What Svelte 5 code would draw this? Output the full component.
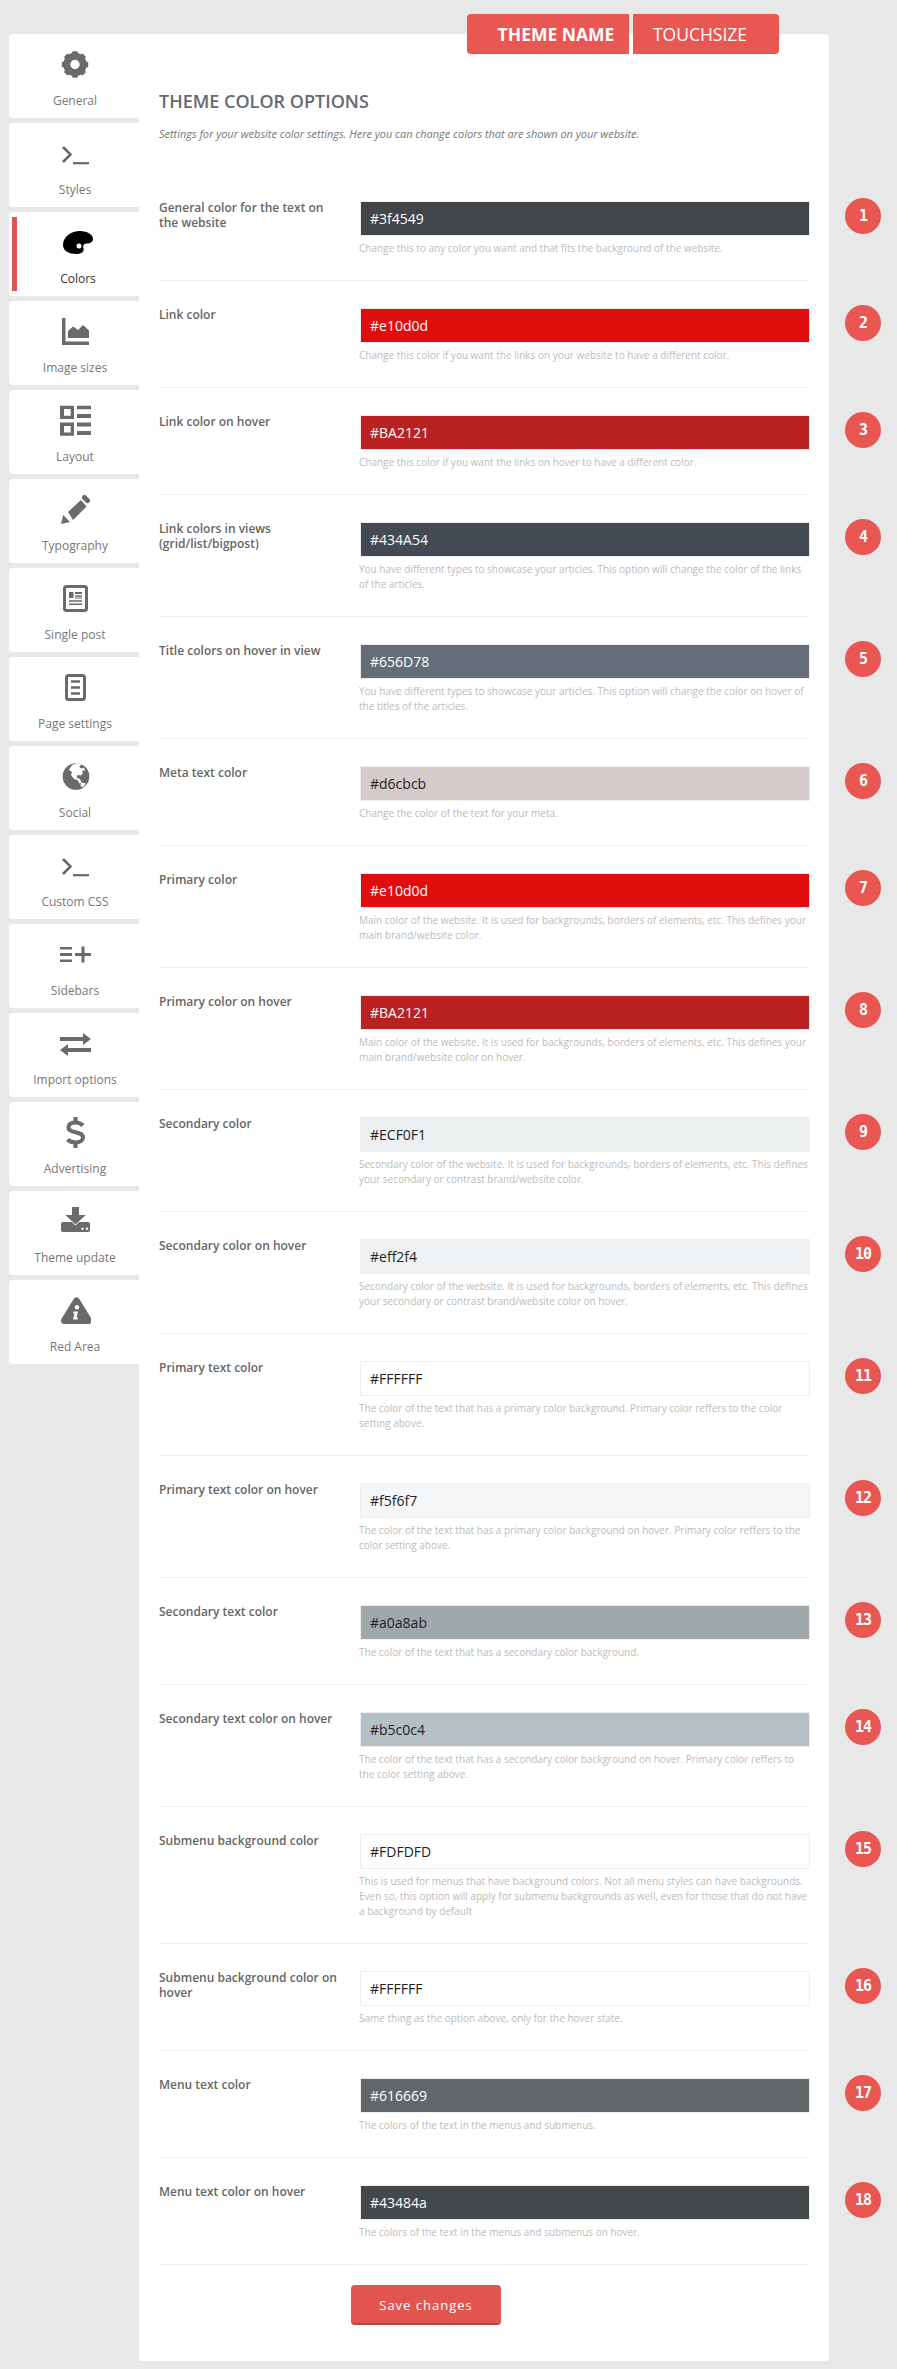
<script>
  const tabs = [
    ['general', 'General'], ['terminal', 'Styles'], ['palette', 'Colors'], ['chart', 'Image sizes'],
    ['layout', 'Layout'], ['pencil', 'Typography'], ['post', 'Single post'], ['page', 'Page settings'],
    ['globe', 'Social'], ['terminal', 'Custom CSS'], ['sidebars', 'Sidebars'], ['swap', 'Import options'],
    ['dollar', 'Advertising'], ['update', 'Theme update'], ['warn', 'Red Area']
  ];
  const mainDesc = 'Main color of the website. It is used for backgrounds, borders of elements, etc. This defines your main brand/website color';
  const secDesc = 'Secondary color of the website. It is used for backgrounds, borders of elements, etc. This defines your secondary or contrast brand/website color';
  const rows = [
    ['General color for the text on the website', '#3f4549', 'Change this to any color you want and that fits the background of the website.', true],
    ['Link color', '#e10d0d', 'Change this color if you want the links on your website to have a different color.', true],
    ['Link color on hover', '#BA2121', 'Change this color if you want the links on hover to have a different color.', true],
    ['Link colors in views (grid/list/bigpost)', '#434A54', 'You have different types to showcase your articles. This option will change the color of the links of the articles.', true],
    ['Title colors on hover in view', '#656D78', 'You have different types to showcase your articles. This option will change the color on hover of the titles of the articles.', true],
    ['Meta text color', '#d6cbcb', 'Change the color of the text for your meta.', false],
    ['Primary color', '#e10d0d', mainDesc + '.', true],
    ['Primary color on hover', '#BA2121', mainDesc + ' on hover.', true],
    ['Secondary color', '#ECF0F1', secDesc + '.', false],
    ['Secondary color on hover', '#eff2f4', secDesc + ' on hover.', false],
    ['Primary text color', '#FFFFFF', 'The color of the text that has a primary color background. Primary color reffers to the color setting above.', false],
    ['Primary text color on hover', '#f5f6f7', 'The color of the text that has a primary color background on hover. Primary color reffers to the color setting above.', false],
    ['Secondary text color', '#a0a8ab', 'The color of the text that has a secondary color background.', false],
    ['Secondary text color on hover', '#b5c0c4', 'The color of the text that has a secondary color background on hover. Primary color reffers to the color setting above.', false],
    ['Submenu background color', '#FDFDFD', 'This is used for menus that have background colors. Not all menu styles can have backgrounds. Even so, this option will apply for submenu backgrounds as well, even for those that do not have a background by default', false],
    ['Submenu background color on hover', '#FFFFFF', 'Same thing as the option above, only for the hover state.', false],
    ['Menu text color', '#616669', 'The colors of the text in the menus and submenus.', true],
    ['Menu text color on hover', '#43484a', 'The colors of the text in the menus and submenus on hover.', true]
  ];
  const teeth = [0, 45, 90, 135, 180, 225, 270, 315];
</script>

<div class="page">
  <header class="brand">
    <div class="brand-name">THEME NAME</div>
    <div class="brand-by">TOUCHSIZE</div>
  </header>
  <div class="shell">
    <nav class="tabs">
      {#each tabs as [icon, label]}
        <div class="tab" class:active={label === 'Colors'}>
          <svg class="ico" viewBox="0 0 32 32" width="32" height="32" aria-hidden="true">
            {#if icon === 'general'}
              <g transform="translate(16 16.5)">
                <circle r="8.2" fill="none" stroke="currentColor" stroke-width="7" />
                {#each teeth as t}
                  <rect x="-2.8" y="-13.2" width="5.6" height="5" rx="1" fill="currentColor" transform="rotate({t})" />
                {/each}
              </g>
            {:else if icon === 'terminal'}
              <path d="M4 10l7.5 7.5L4 25" fill="none" stroke="currentColor" stroke-width="2.6" />
              <path d="M14 26.2h16" fill="none" stroke="currentColor" stroke-width="2.2" />
            {:else if icon === 'palette'}
              <path d="M1 19C1 11 9 5 18 5c8 0 13 4 13 8 0 3-3 4.500-6 4.500-3 0-4.500 2-3.500 5 1 3-2 5.500-7 5.500C7 28 1 25 1 19Z" fill="currentColor" />
              <circle cx="17" cy="20" r="2.500" fill="#fff" />
            {:else if icon === 'chart'}
              <path d="M3 3h3.500v23.500H30V30H3ZM9 23v-7l5-4.500 5 3.500 5-5 6 5.500V23Z" fill="currentColor" />
            {:else if icon === 'layout'}
              <path fill-rule="evenodd" d="M1 1.700h14V15H1ZM5 5v6.700h6.700V5ZM1 18.500h14v13.200H1ZM5 22v6.500h6.700V22Z" fill="currentColor" />
              <path d="M18 1.700h14v3.600H18ZM18 10h14v4H18ZM18 18.500h14v4H18ZM18 27h14v4H18Z" fill="currentColor" />
            {:else if icon === 'pencil'}
              <path d="M2 31l2.200-9 6.800 7ZM9 19L22 7l5.500 6.500L14 27Z" fill="currentColor" />
              <path d="M25.500 4.500l3 3" stroke="currentColor" stroke-width="5" stroke-linecap="round" />
            {:else if icon === 'post'}
              <rect x="5.500" y="4.500" width="22" height="24" rx="2" fill="none" stroke="currentColor" stroke-width="3" />
              <path d="M10 10h4.500v6H10ZM16 10h7v2h-7ZM16 13.200h7v1.500h-7ZM16 15.500h7v1h-7ZM10 18.300h13v1.500H10ZM10 21.500h13v1.500H10Z" fill="currentColor" />
            {:else if icon === 'page'}
              <rect x="7.500" y="4.500" width="18" height="24" rx="2" fill="none" stroke="currentColor" stroke-width="3" />
              <path d="M12 10.500h9M12 16.500h9M12 22.500h9" stroke="currentColor" stroke-width="2.500" />
            {:else if icon === 'globe'}
              <circle cx="17" cy="16.500" r="13.300" fill="currentColor" />
              <path d="M13 5l5-2 4.500 1.500L20 7l3 1.500 2-1 1 3-3 .5 1 2.500-2.500 2-3-.5-1 2.500 3.500 1.500 1.500 3.500-2 1-2-3.500-3.500-1L12 15l1-3-3-2Z" fill="#fff" />
              <path d="M22 22.500l5 1-3 4-2.500-1.500Z" fill="#fff" />
            {:else if icon === 'sidebars'}
              <path d="M1 9h12v2.500H1ZM1 15h12v3H1ZM1 21.500h12V24H1ZM16 15h16v3H16ZM22.500 8.500h3v16h-3Z" fill="currentColor" />
            {:else if icon === 'swap'}
              <path d="M1 10h23V6l8 6-8 6v-4H1ZM32 21H9v-4l-8 6 8 6v-4h23Z" fill="currentColor" />
            {:else if icon === 'dollar'}
              <path d="M24 9.500C22 7.500 19 6.500 16.500 6.500c-4.500 0-7 2-7 5 0 6.500 14.500 3 14.500 10 0 3-3 5-7.500 5-3 0-6-1-8-3" fill="none" stroke="currentColor" stroke-width="4" />
              <path d="M16.500 1v5M16.500 27v5" stroke="currentColor" stroke-width="4" />
            {:else if icon === 'update'}
              <rect x="2" y="17" width="29" height="10" rx="2" fill="currentColor" />
              <path d="M13 2h7v8h6.700l-10.200 9.500L6.300 10H13Z" fill="currentColor" stroke="#fff" stroke-width="1.500" paint-order="stroke" />
              <circle cx="23.500" cy="23.800" r="1.200" fill="#fff" />
              <circle cx="28" cy="23.800" r="1.200" fill="#fff" />
            {:else if icon === 'warn'}
              <path d="M17.500 7L29.500 26.500H5.500Z" fill="currentColor" stroke="currentColor" stroke-width="7" stroke-linejoin="round" />
              <circle cx="18" cy="13.300" r="2.200" fill="#fff" />
              <path d="M14.500 17.500h4.500l-1.500 6h1.500l-.5 2h-4.500l1.500-6h-1.500Z" fill="#fff" />
            {/if}
          </svg>
          <span class="tab-label">{label}</span>
        </div>
      {/each}
    </nav>

    <main class="panel">
      <div class="head">
        <h1>THEME COLOR OPTIONS</h1>
        <p>Settings for your website color settings. Here you can change colors that are shown on your website.</p>
      </div>

      {#each rows as [label, value, desc, dark], i}
        <div class="row">
          <label class="row-label" for="c{i}">{label}</label>
          <div class="row-field">
            <input id="c{i}" class="swatch" class:dark type="text" {value} style="background-color: {value}" readonly />
            <p class="desc">{desc}</p>
          </div>
          <span class="badge">{i + 1}</span>
        </div>
      {/each}

      <div class="actions">
        <button type="button" class="save">Save changes</button>
      </div>
    </main>
  </div>
</div>

<style>
  :global(body) {
    margin: 0;
    background: #e8e8e8;
  }
  .page {
    font-family: "Open Sans", "Liberation Sans", sans-serif;
    padding-top: 14px;
    padding-bottom: 8px;
    width: 897px;
    box-sizing: border-box;
  }
  .brand {
    display: flex;
    gap: 4px;
    margin-left: 467px;
    height: 40px;
    margin-bottom: -20px;
    position: relative;
    z-index: 1;
  }
  .brand-name,
  .brand-by {
    background: #e85751;
    color: #fff;
    display: flex;
    align-items: center;
    justify-content: center;
    box-sizing: border-box;
  }
  .brand-name {
    width: 162px;
    font-weight: 700;
    font-size: 17.5px;
    border-radius: 4px 0 0 4px;
    padding-left: 16px;
  }
  .brand-by {
    width: 146px;
    font-weight: 400;
    font-size: 17.5px;
    border-radius: 0 4px 4px 0;
    padding-right: 12px;
  }
  .shell {
    display: flex;
    align-items: flex-start;
    padding-left: 9px;
  }
  .tabs {
    width: 130px;
    display: flex;
    flex-direction: column;
    gap: 5px;
    flex: none;
  }
  .tab {
    position: relative;
    height: 84px;
    background: #fff;
    border-radius: 4px 0 0 4px;
    display: flex;
    flex-direction: column;
    align-items: center;
    padding: 14px 0 0 2px;
    box-sizing: border-box;
    color: #6a6a6a;
  }
  .ico {
    display: block;
  }
  .tab-label {
    display: block;
    margin-top: 13px;
    font-size: 12px;
    line-height: 16px;
    color: #777;
  }
  .tab.active {
    color: #000;
    padding-left: 8px;
  }
  .tab.active::before {
    content: "";
    position: absolute;
    left: 3px;
    top: 5px;
    bottom: 5px;
    width: 5px;
    background: #de5450;
  }
  .tab.active .tab-label {
    color: #333;
  }
  .panel {
    width: 690px;
    flex: none;
    height: 2327px;
    box-sizing: border-box;
    padding: 0 20px;
    background: #fff;
    border-radius: 0 4px 4px 0;
  }
  .head {
    height: 140px;
    padding-top: 56px;
    box-sizing: border-box;
  }
  h1 {
    margin: 0;
    font-size: 18px;
    line-height: 22px;
    font-weight: 600;
    color: #656a72;
  }
  .head p {
    margin: 14px 0 0;
    font-size: 11px;
    line-height: 16px;
    font-style: italic;
    color: #777;
    letter-spacing: -0.03px;
  }
  .row {
    position: relative;
    display: flex;
    border-bottom: 1px solid #eee;
    padding: 26px 0 24px;
  }
  .row-label {
    width: 178px;
    margin-right: 23px;
    flex: none;
    font-size: 12px;
    line-height: 15px;
    font-weight: 600;
    color: #666;
  }
  .row-field {
    width: 450px;
    flex: none;
    margin-right: -1px;
    padding-top: 1px;
  }
  .swatch {
    display: block;
    width: 100%;
    height: 35px;
    box-sizing: border-box;
    border: 1px solid #eee;
    padding: 0 9px;
    font-family: inherit;
    font-size: 14px;
    color: #222;
    outline: none;
    border-radius: 0;
  }
  .swatch.dark {
    color: #fff;
  }
  .desc {
    margin: 5px 0 0 -1px;
    font-size: 10px;
    line-height: 15px;
    color: #bbb;
  }
  .badge {
    position: absolute;
    left: calc(100% + 36px);
    top: 24px;
    width: 36px;
    height: 36px;
    border-radius: 50%;
    background: #e85751;
    color: #fff;
    font-family: "DejaVu Sans Mono", "Liberation Mono", monospace;
    font-size: 15px;
    font-weight: 700;
    letter-spacing: -1px;
    display: flex;
    align-items: center;
    justify-content: center;
  }
  .actions {
    padding-top: 20px;
    padding-left: 192px;
  }
  .save {
    display: block;
    width: 150px;
    height: 40px;
    background: #e2554f;
    border: 0;
    border-bottom: 2px solid #b5474a;
    border-radius: 4px;
    color: #fff;
    font-family: inherit;
    font-size: 13px;
    letter-spacing: 1px;
    padding: 2px 0 0;
  }
</style>
